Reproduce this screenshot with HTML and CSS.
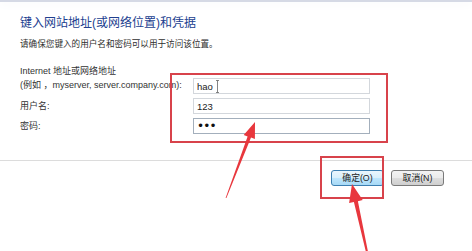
FILE: index.html
```html
<!DOCTYPE html>
<html lang="zh-CN">
<head>
  <meta charset="UTF-8">
  <title>键入网站地址和凭据</title>
  <link rel="stylesheet" href="styles.css">
</head>
<body>
  <div class="dialog">
    <div class="topbar"></div>
    <div class="content">
      <h1>键入网站地址(或网络位置)和凭据</h1>
      <p class="hint">请确保您键入的用户名和密码可以用于访问该位置。</p>

      <div class="form">
        <label class="label first">Internet 地址或网络地址<br>(例如 ，myserver, server.company.com):</label>
        <input type="text" class="field" value="hao">

        <label class="label">用户名:</label>
        <input type="text" class="field" value="123">

        <label class="label">密码:</label>
        <input type="password" class="field focused" value="123">
      </div>
    </div>

    <div class="footer">
      <button class="btn default">确定(O)</button>
      <button class="btn">取消(N)</button>
    </div>
  </div>

  <!-- annotations drawn on top of the screenshot -->
  <svg class="marks" width="472" height="251" viewBox="0 0 472 251">
    <path d="M216 80.5h3M217.5 80.5v12M216 92.5h3" stroke="#666" stroke-width="0.8" fill="none"/>
    <rect x="171" y="74" width="216" height="68" fill="none" stroke="#d8434b" stroke-width="2"/>
    <rect x="321" y="157" width="62" height="41" fill="none" stroke="#d8434b" stroke-width="2"/>
    <polygon points="225.6,197.9 247.6,136.4 243.7,134.9 255,122 254.9,139.1 251,137.6 226.4,198.1" fill="#e8373d"/>
    <polygon points="366,252.2 353.9,202 349.1,203.1 352,184 362.7,200.1 357.9,201.2 368,251.8" fill="#e8373d"/>
  </svg>
</body>
</html>
```

FILE: styles.css
```css
body {
  margin: 0;
  width: 472px;
  height: 251px;
  overflow: hidden;
  background: #ffffff;
  font-family: "Liberation Sans", "Noto Sans CJK SC", sans-serif;
  color: #2b2b2b;
  position: relative;
}

.topbar {
  height: 2px;
  background: #d5d9e5;
  box-shadow: 0 2px 10px #eef1f7;
}

.content {
  padding-left: 20px;
}

h1 {
  margin: 13px 0 0;
  font-size: 12px;
  line-height: 16px;
  font-weight: normal;
  color: #21408f;
}

.hint {
  margin: 7px 0 0;
  font-size: 8.6px;
  line-height: 12px;
  color: #2e2e2e;
}

.form {
  margin-top: 14px;
  display: grid;
  grid-template-columns: 173px 177px;
  row-gap: 4px;
  align-items: center;
}

.label {
  font-size: 9px;
  line-height: 14px;
  color: #333;
}

.label.first {
  padding-bottom: 2px;
}

.form .first,
.form .first + .field {
  align-self: end;
}

.field {
  box-sizing: border-box;
  height: 16px;
  width: 177px;
  margin: 0;
  padding: 0 3px;
  border: 1px solid #d3d7dc;
  font-family: "Liberation Sans", sans-serif;
  font-size: 9.5px;
  color: #222;
  outline: none;
}

.field.focused {
  border-color: #a3afbc;
  font-family: "DejaVu Sans", sans-serif;
  font-size: 12px;
  letter-spacing: -0.8px;
  color: #111;
}

.footer {
  margin-top: 26px;
  border-top: 1px solid #dcdcdc;
  display: flex;
  justify-content: flex-end;
  gap: 7px;
  padding: 9px 28px 0 0;
}

.btn {
  box-sizing: border-box;
  width: 53px;
  height: 16px;
  padding: 0;
  border: 1px solid #7a7a7a;
  border-radius: 3px;
  background: linear-gradient(#f3f3f3, #ebebeb 50%, #dddddd 51%, #cfcfcf);
  font-family: "Liberation Sans", "Noto Sans CJK SC", sans-serif;
  font-size: 8.8px;
  line-height: 14px;
  color: #222;
}

.btn.default {
  border-color: #3c7fb1;
  background: linear-gradient(#eaf6fd, #d9f0fc 50%, #bee6fd 51%, #a7d9f5);
}

.marks {
  position: absolute;
  left: 0;
  top: 0;
}
```
